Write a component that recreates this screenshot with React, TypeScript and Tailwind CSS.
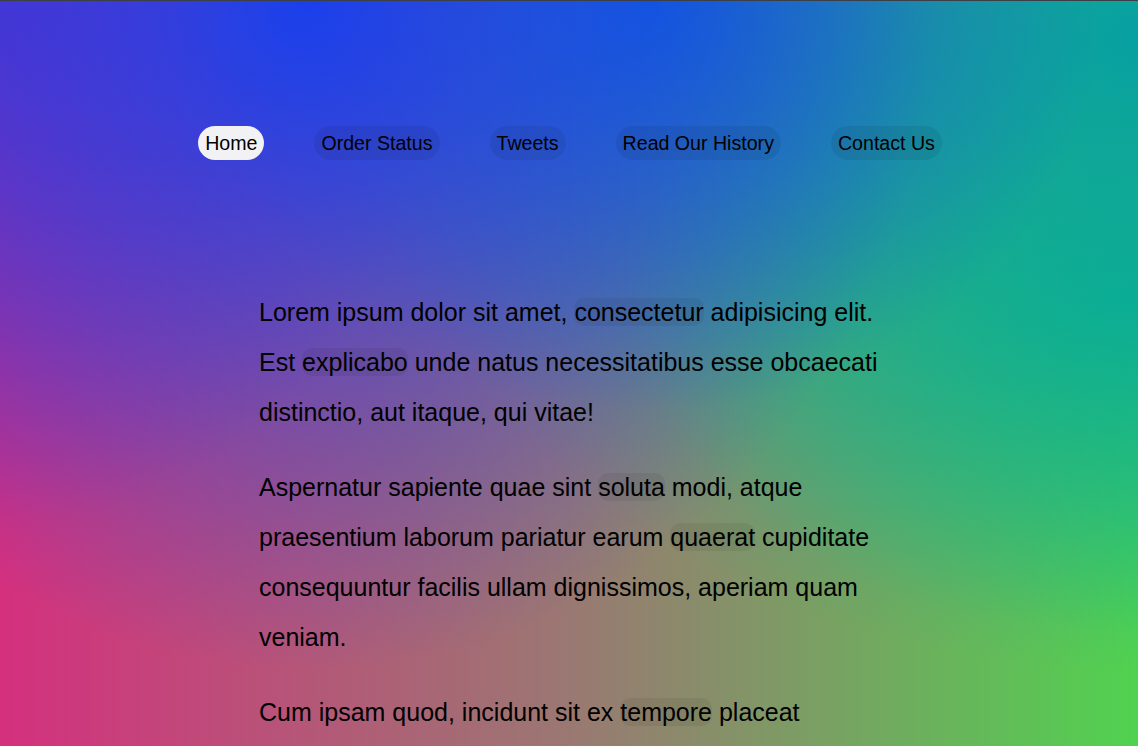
import clsx from "clsx";

const links = ["Home", "Order Status", "Tweets", "Read Our History", "Contact Us"];

function Mark({ children }: { children: string }) {
  return <span className="rounded-[10px] bg-black/[0.06]">{children}</span>;
}

export default function App() {
  return (
    <div className="h-screen overflow-hidden border-t border-[#3b3f48] font-['Liberation_Sans',Arial,sans-serif] text-black [background-image:radial-gradient(ellipse_55%_90%_at_27%_0%,#1a40ec,transparent),radial-gradient(ellipse_40%_55%_at_57%_0%,#0e62d8,transparent),radial-gradient(ellipse_70%_85%_at_100%_5%,#07a0a2,transparent),radial-gradient(ellipse_45%_45%_at_100%_40%,#10be84,transparent),radial-gradient(ellipse_40%_70%_at_0%_0%,#6a2cc0,transparent),linear-gradient(to_right,#d4307e,#9a7872_50%,#50d250)]">
      <nav className="flex justify-center gap-[50px] pt-[125px] pl-[2px]">
        {links.map((l, i) => (
          <a
            key={l}
            href="#"
            className={clsx(
              "rounded-full px-[7px] py-[5px] text-[19.6px] leading-[24px]",
              i === 0 ? "bg-[#f2f2f4]" : "bg-black/[0.07]"
            )}
          >
            {l}
          </a>
        ))}
      </nav>

      <main className="mx-auto mt-[127px] w-[620px] text-[25px] leading-[50px]">
        <p className="mb-[25px]">
          Lorem ipsum dolor sit amet, <Mark>consectetur</Mark> adipisicing elit.
          Est <Mark>explicabo</Mark> unde natus necessitatibus esse obcaecati
          distinctio, aut itaque, qui vitae!
        </p>
        <p className="mb-[25px]">
          Aspernatur sapiente quae sint <Mark>soluta</Mark> modi, atque
          praesentium laborum pariatur earum <Mark>quaerat</Mark> cupiditate
          consequuntur facilis ullam dignissimos, aperiam quam veniam.
        </p>
        <p className="mb-[25px]">
          Cum ipsam quod, incidunt sit ex <Mark>tempore</Mark> placeat{" "}
          <Mark>molestiae</Mark> dolorum, nobis sequi ab minima repellendus
          voluptatibus.
        </p>
      </main>
    </div>
  );
}
